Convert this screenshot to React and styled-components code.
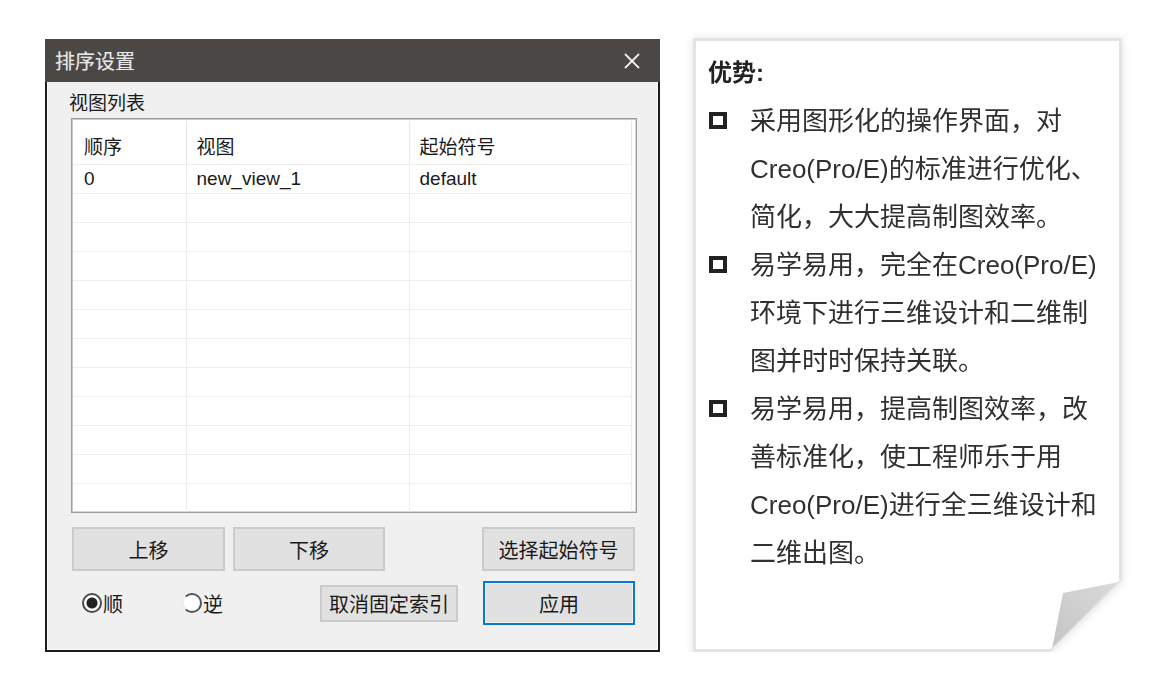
import React from "react";
import styled, { createGlobalStyle } from "styled-components";

const GlobalStyle = createGlobalStyle`
  body {
    margin: 0;
    background: #ffffff;
    font-family: "Liberation Sans", "Noto Sans CJK SC", sans-serif;
  }
`;

const rows = [
  { order: "0", view: "new_view_1", symbol: "default" },
  ...Array.from({ length: 11 }, () => ({ order: "", view: "", symbol: "" })),
];

const points = [
  ["采用图形化的操作界面，对", "Creo(Pro/E)的标准进行优化、", "简化，大大提高制图效率。"],
  ["易学易用，完全在Creo(Pro/E)", "环境下进行三维设计和二维制", "图并时时保持关联。"],
  ["易学易用，提高制图效率，改", "善标准化，使工程师乐于用", "Creo(Pro/E)进行全三维设计和", "二维出图。"],
];

const App = () => {
  return (
    <Page>
      <GlobalStyle />
      <Dialog>
        <TitleBar>
          <Title>排序设置</Title>
          <CloseIcon viewBox="0 0 20 20">
            <line x1="3" y1="3" x2="17" y2="17" />
            <line x1="17" y1="3" x2="3" y2="17" />
          </CloseIcon>
        </TitleBar>
        <Body>
          <Label>视图列表</Label>
          <TableBox>
            <Grid>
              <thead>
                <tr>
                  <Th $w={113}>顺序</Th>
                  <Th $w={223}>视图</Th>
                  <Th $w={222}>起始符号</Th>
                  <Th />
                </tr>
              </thead>
              <tbody>
                {rows.map((r, i) => (
                  <tr key={i}>
                    <Td>{r.order}</Td>
                    <Td>{r.view}</Td>
                    <Td>{r.symbol}</Td>
                    <Td />
                  </tr>
                ))}
              </tbody>
            </Grid>
          </TableBox>
          <ButtonRow>
            <Button $w={153}>上移</Button>
            <Button $w={152}>下移</Button>
            <Spacer />
            <Button $w={153}>选择起始符号</Button>
          </ButtonRow>
          <ButtonRow $second>
            <Radio $w={92} $first>
              <RadioDot $checked />顺
            </Radio>
            <Radio $w={130}>
              <RadioDot />逆
            </Radio>
            <Button $w={138} $h={37}>取消固定索引</Button>
            <Spacer />
            <Button $w={152} $primary>应用</Button>
          </ButtonRow>
        </Body>
      </Dialog>

      <NoteShadow>
        <Note>
          <NoteTitle>优势:</NoteTitle>
          <List>
            {points.map((lines, i) => (
              <Item key={i}>
                <Bullet />
                <ItemText>
                  {lines.map((l, j) => (
                    <React.Fragment key={j}>
                      {l}
                      {j < lines.length - 1 && <br />}
                    </React.Fragment>
                  ))}
                </ItemText>
              </Item>
            ))}
          </List>
          <Fold viewBox="0 0 429 614">
            <defs>
              <linearGradient id="foldGrad" x1="0" y1="1" x2="1" y2="0">
                <stop offset="0" stopColor="#c4c4c4" />
                <stop offset="1" stopColor="#dadada" />
              </linearGradient>
            </defs>
            <polygon points="370,555 426,544 359,611" fill="url(#foldGrad)" />
            <line x1="357" y1="614" x2="429" y2="542" stroke="#e2e4e8" strokeWidth="3" />
          </Fold>
        </Note>
      </NoteShadow>
    </Page>
  );
};

export default App;

const Page = styled.div`
  display: flex;
  align-items: flex-start;
  gap: 33px;
  padding: 38px 0 0 45px;
`;

const Dialog = styled.div`
  width: 615px;
  height: 613px;
  margin-top: 1px;
  box-sizing: border-box;
  border: 2px solid #1c1c1c;
  border-top: none;
  background: #f0f0f0;
  display: flex;
  flex-direction: column;
`;

const TitleBar = styled.div`
  height: 43px;
  margin: 0 -2px;
  background: #4a4744;
  display: flex;
  align-items: center;
  justify-content: space-between;
  padding: 0 18px 0 10px;
  flex-shrink: 0;
`;

const Title = styled.div`
  font-family: "Noto Sans CJK SC", sans-serif;
  font-size: 20px;
  color: #e6e6e6;
  text-shadow: 0 0 1px rgba(255, 255, 255, 0.4);
`;

const CloseIcon = styled.svg`
  width: 20px;
  height: 20px;
  stroke: #f0f0f0;
  stroke-width: 1.8;
`;

const Body = styled.div`
  flex: 1;
  display: flex;
  flex-direction: column;
  padding: 6px 20px 0 23px;
  border: 1px solid #fafafa;
  border-top: none;
`;

const Label = styled.div`
  height: 28px;
  line-height: 28px;
  margin: 0 0 2px -2px;
  font-family: "Noto Sans CJK SC", sans-serif;
  font-size: 19px;
  color: #1a1a1a;
`;

const TableBox = styled.div`
  height: 395px;
  box-sizing: border-box;
  border: 1px solid #9c9c9c;
  box-shadow: inset 1px 1px 0 #c8c8c8, inset -1px -1px 0 #d6d6d6;
  padding: 2px 4px 1px 1px;
  background: #ffffff;
  overflow: hidden;
`;

const Grid = styled.table`
  border-collapse: collapse;
  width: 100%;
  table-layout: fixed;
  font-size: 19px;
  color: #1a1a1a;
`;

const Th = styled.th`
  width: ${(p) => (p.$w ? `${p.$w}px` : "auto")};
  height: 43px;
  box-sizing: border-box;
  padding: 6px 0 0 10px;
  text-align: left;
  font-weight: normal;
  font-family: "Noto Sans CJK SC", sans-serif;
  border-right: 1px solid #e6e6e6;
  border-bottom: 1px solid #ececec;

  &:first-child {
    padding-left: 11px;
  }
`;

const Td = styled.td`
  height: 29px;
  box-sizing: border-box;
  padding: 0 0 0 10px;
  border-right: 1px solid #ededed;
  border-bottom: 1px solid #efefef;
  white-space: nowrap;

  &:first-child {
    padding-left: 11px;
  }
`;

const ButtonRow = styled.div`
  display: flex;
  align-items: center;
  gap: 8px;
  height: 44px;
  margin-top: ${(p) => (p.$second ? "10px" : "14px")};
  padding: 0 2px 0 1px;
`;

const Spacer = styled.div`
  flex: 1;
`;

const Button = styled.button`
  width: ${(p) => p.$w}px;
  height: ${(p) => p.$h || 44}px;
  box-sizing: border-box;
  background: #e1e1e1;
  border: ${(p) => (p.$primary ? "2px solid #0a78d7" : "2px solid #cbcbcb")};
  box-shadow: ${(p) => (p.$primary ? "inset 0 0 0 1px #f4f0e8" : "none")};
  font-family: "Noto Sans CJK SC", sans-serif;
  font-size: 20px;
  color: #1a1a1a;
  padding: 0;
  cursor: pointer;
`;

const Radio = styled.label`
  width: ${(p) => p.$w}px;
  display: flex;
  align-items: center;
  gap: 1px;
  margin-left: ${(p) => (p.$first ? "10px" : "0")};
  font-family: "Noto Sans CJK SC", sans-serif;
  font-size: 20px;
  color: #1a1a1a;
  flex-shrink: 0;
`;

const RadioDot = styled.span`
  width: 20px;
  height: 20px;
  box-sizing: border-box;
  border-radius: 50%;
  border: 2px solid #4a4a4a;
  background: ${(p) =>
    p.$checked
      ? "radial-gradient(circle, #222 0 5px, #fff 6px)"
      : "#ffffff"};
  ${(p) => (p.$checked ? "" : "border-color: #555; border-left-color: #eee;")}
`;

const NoteShadow = styled.div`
  filter: drop-shadow(0 1px 4px rgba(0, 0, 0, 0.12));
`;

const Note = styled.div`
  position: relative;
  width: 429px;
  height: 614px;
  box-sizing: border-box;
  background: #ffffff;
  border: 3px solid #e2e4e8;
  padding: 8px 10px 0 12px;
  clip-path: polygon(0 0, 100% 0, 100% 542px, 357px 100%, 0 100%);
  color: #303030;
`;

const NoteTitle = styled.div`
  font-size: 24px;
  font-weight: bold;
  line-height: 48px;
  color: #222;
`;

const List = styled.div`
  display: flex;
  flex-direction: column;
`;

const Item = styled.div`
  display: flex;
  align-items: flex-start;
`;

const Bullet = styled.span`
  width: 18px;
  height: 17px;
  box-sizing: border-box;
  border: 4px solid #222;
  margin: 15px 23px 0 1px;
  flex-shrink: 0;
`;

const ItemText = styled.div`
  font-size: 26px;
  line-height: 48px;
  white-space: nowrap;
`;

const Fold = styled.svg`
  position: absolute;
  left: -3px;
  top: -3px;
  width: 429px;
  height: 614px;
  pointer-events: none;
`;
